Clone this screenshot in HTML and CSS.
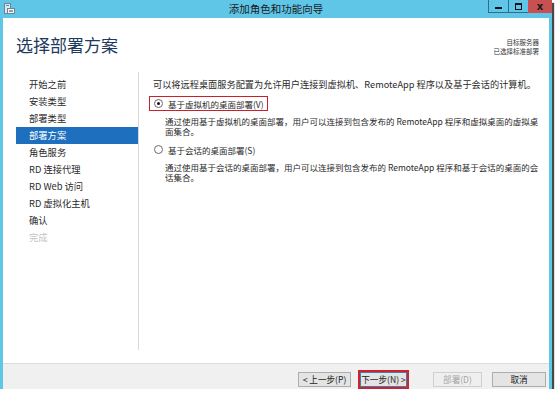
FILE: index.html
```html
<!DOCTYPE html>
<html lang="zh-CN">
<head>
    <meta charset="UTF-8">
    <title>添加角色和功能向导</title>
    <link rel="stylesheet" href="styles.css">
</head>
<body>
    <div class="window">
        <div class="titlebar">
            <svg class="app-icon" width="11" height="11" viewBox="0 0 11 11">
                <rect x="0.5" y="0.5" width="6" height="10" fill="#dfe8ee" stroke="#6d8597"/>
                <rect x="3.5" y="5.5" width="7" height="5" fill="#f4f4f4" stroke="#6d8597"/>
                <rect x="5" y="7" width="4" height="2" fill="#8aa0b0"/>
                <line x1="2" y1="2.5" x2="5" y2="2.5" stroke="#6d8597"/>
            </svg>
            <div class="title">添加角色和功能向导</div>
            <div class="controls">
                <div class="ctl ctl-min"><span></span></div>
                <div class="ctl ctl-max"><span></span></div>
                <div class="ctl ctl-close">x</div>
            </div>
        </div>

        <div class="client">
            <div class="page-head">
                <h1>选择部署方案</h1>
                <div class="target">
                    <div>目标服务器</div>
                    <div>已选择标准部署</div>
                </div>
            </div>

            <div class="main">
                <ul class="steps">
                    <li>开始之前</li>
                    <li>安装类型</li>
                    <li>部署类型</li>
                    <li class="active">部署方案</li>
                    <li>角色服务</li>
                    <li>RD 连接代理</li>
                    <li>RD Web 访问</li>
                    <li>RD 虚拟化主机</li>
                    <li>确认</li>
                    <li class="disabled">完成</li>
                </ul>

                <div class="content">
                    <p class="intro">可以将远程桌面服务配置为允许用户连接到虚拟机、RemoteApp 程序以及基于会话的计算机。</p>

                    <div class="option">
                        <label class="radio-row marked">
                            <span class="radio checked"></span>
                            <span>基于虚拟机的桌面部署(V)</span>
                        </label>
                        <p class="desc">通过使用基于虚拟机的桌面部署，用户可以连接到包含发布的 RemoteApp 程序和虚拟桌面的虚拟桌面集合。</p>
                    </div>

                    <div class="option">
                        <label class="radio-row">
                            <span class="radio"></span>
                            <span>基于会话的桌面部署(S)</span>
                        </label>
                        <p class="desc">通过使用基于会话的桌面部署，用户可以连接到包含发布的 RemoteApp 程序和基于会话的桌面的会话集合。</p>
                    </div>
                </div>
            </div>

            <div class="footer">
                <button class="btn">&lt; 上一步(P)</button>
                <span class="mark"><button class="btn btn-next">下一步(N) &gt;</button></span>
                <button class="btn btn-off">部署(D)</button>
                <button class="btn">取消</button>
            </div>
        </div>
    </div>
</body>
</html>
```

FILE: styles.css
```css
body {
    margin: 0;
    padding: 0;
    background-color: #fff;
    font-family: "Noto Sans CJK SC", "Noto Sans", sans-serif;
    color: #1e1e1e;
}

.window {
    width: 552px;
    height: 389px;
    background-color: #5fc6e8;
    display: flex;
    flex-direction: column;
    box-shadow: 2px 3px 1px rgba(40, 40, 40, 0.85);
}

.titlebar {
    height: 18px;
    display: flex;
    align-items: flex-start;
    position: relative;
    flex-shrink: 0;
}

.app-icon {
    margin: 3px 0 0 4px;
}

.title {
    position: absolute;
    left: 0;
    right: 0;
    top: 2px;
    text-align: center;
    font-size: 10.5px;
    line-height: 14px;
    color: #1a1a1a;
}

.controls {
    margin-left: auto;
    display: flex;
    height: 13px;
    position: relative;
}

.ctl {
    height: 13px;
    display: flex;
    align-items: center;
    justify-content: center;
    box-sizing: border-box;
}

.ctl-min {
    width: 20px;
    border-left: 1px solid #2f6f86;
    border-bottom: 1px solid #2f6f86;
}

.ctl-min span {
    width: 7px;
    height: 2px;
    margin-top: 3px;
    background-color: #111;
}

.ctl-max {
    width: 20px;
    border-left: 1px solid #2f6f86;
    border-bottom: 1px solid #2f6f86;
}

.ctl-max span {
    width: 5px;
    height: 4px;
    border: 1px solid #111;
    border-top-width: 2px;
}

.ctl-close {
    width: 24px;
    background-color: #c75050;
    color: #1a1a1a;
    font-family: "DejaVu Sans", sans-serif;
    font-weight: bold;
    font-size: 10px;
    line-height: 13px;
}

.client {
    flex: 1;
    margin: 0 3px;
    background-color: #fff;
    display: flex;
    flex-direction: column;
}

.page-head {
    height: 54px;
    display: flex;
    justify-content: space-between;
    align-items: flex-start;
    padding: 0 10px 0 13px;
    flex-shrink: 0;
}

.page-head h1 {
    margin: 17px 0 0 0;
    font-size: 17px;
    line-height: 20px;
    font-weight: normal;
    color: #1e3a5c;
}

.target {
    margin-top: 20px;
    text-align: right;
    font-size: 6.5px;
    line-height: 9px;
    color: #333;
}

.main {
    height: 278px;
    display: flex;
    flex-shrink: 0;
}

.steps {
    list-style: none;
    margin: 0 0 0 13px;
    padding: 4px 0 0 0;
    width: 122px;
    flex-shrink: 0;
    border-right: 1px solid #d9d9d9;
    font-size: 9.3px;
}

.steps li {
    height: 17px;
    line-height: 17px;
    padding-left: 13px;
    color: #2a2a2a;
}

.steps li.active {
    background-color: #1e6fbd;
    color: #fff;
}

.steps li.disabled {
    color: #c4c4c4;
}

.content {
    flex: 1;
    min-width: 0;
    padding: 4px 6px 0 14px;
    font-size: 8.5px;
}

.intro {
    margin: 0;
    font-size: 9.2px;
    line-height: 17px;
    white-space: nowrap;
    color: #2a2a2a;
}

.option {
    margin-top: 2px;
}

.radio-row {
    display: inline-flex;
    align-items: center;
    gap: 5px;
    height: 13px;
    padding: 0 3px 0 4px;
    margin-left: -4px;
    border: 1.5px solid transparent;
    color: #2a2a2a;
}

.radio-row.marked {
    border-color: #c8202c;
}

.radio {
    width: 7px;
    height: 7px;
    border: 1px solid #6a6a6a;
    border-radius: 50%;
    background-color: #fff;
    display: flex;
    align-items: center;
    justify-content: center;
}

.radio.checked::after {
    content: "";
    width: 3px;
    height: 3px;
    border-radius: 50%;
    background-color: #111;
}

.desc {
    margin: 5px 0 6px 12px;
    line-height: 10px;
    color: #2a2a2a;
}

.footer {
    flex: 1;
    background-color: #f0f0f0;
    border-top: 1px solid #dcdcdc;
    margin-top: 13px;
    display: flex;
    align-items: flex-start;
    justify-content: flex-end;
    padding: 8px 3px 0 0;
}

.btn {
    width: 53px;
    height: 15px;
    padding: 0;
    border: 1px solid #adadad;
    background-color: #e4e4e4;
    font-family: "Noto Sans CJK SC", sans-serif;
    font-size: 8.6px;
    line-height: 13px;
    white-space: nowrap;
    color: #222;
}

.mark {
    margin: -2px 0 0 7px;
    border: 2px solid #d0222c;
    display: flex;
}

.btn-next {
    width: 47px;
    height: 15px;
    border-color: #3c7fb1;
}

.btn-off {
    margin-left: 24px;
    width: 49px;
    color: #a6a6a6;
    border-color: #cfcfcf;
    background-color: #efefef;
}

.btn-off + .btn {
    margin-left: 10px;
    width: 54px;
}
```
